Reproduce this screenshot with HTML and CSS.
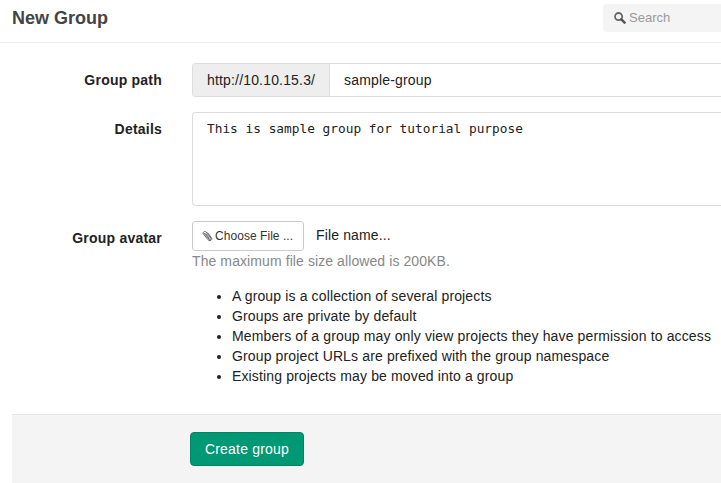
FILE: index.html
```html
<!DOCTYPE html>
<html lang="en">
<head>
<meta charset="utf-8">
<title>New Group</title>
<link rel="stylesheet" href="styles.css">
</head>
<body>
<header class="navbar">
  <h1 class="title">New Group</h1>
  <div class="search">
    <svg class="search-icon" viewBox="0 0 12 12"><circle cx="4.6" cy="4.6" r="3.6" fill="none" stroke="#666" stroke-width="1.8"/><path d="M7.4 7.4l3.2 3.2" stroke="#555" stroke-width="2.5" stroke-linecap="round"/></svg>
    <span>Search</span>
  </div>
</header>
<main class="content">
  <form class="group-form">
    <div class="row path-row">
      <label class="label">Group path</label>
      <div class="input-group">
        <span class="addon">http://10.10.15.3/</span>
        <span class="path-value">sample-group</span>
      </div>
    </div>
    <div class="row details-row">
      <label class="label">Details</label>
      <div class="details">This is sample group for tutorial purpose</div>
    </div>
    <div class="row avatar-row">
      <label class="label">Group avatar</label>
      <div class="field">
        <div class="file-line">
          <span class="choose"><svg class="clip" viewBox="0 0 11 12"><path d="M2.2 3.2l5 6.1c.8.9 2.4-.3 1.6-1.3L4.1 2.1C2.8.5.2 2.3 1.5 4.1l4.6 5.7c1.8 2.1 4.9-.1 3.3-2.3L5.5 2.7M3.8 3.8l3.4 4.3" fill="none" stroke="#555" stroke-width=".9" stroke-linecap="round"/></svg><span>Choose File ...</span></span>
          <span class="file-name">File name...</span>
        </div>
        <div class="hint">The maximum file size allowed is 200KB.</div>
      </div>
    </div>
    <ul class="notes">
      <li>A group is a collection of several projects</li>
      <li>Groups are private by default</li>
      <li>Members of a group may only view projects they have permission to access</li>
      <li>Group project URLs are prefixed with the group namespace</li>
      <li>Existing projects may be moved into a group</li>
    </ul>
    <div class="actions"><button type="button" class="create">Create group</button></div>
  </form>
</main>
</body>
</html>
```
FILE: styles.css
```css
* { box-sizing: border-box; }
body {
  margin: 0;
  height: 483px;
  overflow: hidden;
  background: #fff;
  color: #222;
  font: 14px/20px "Liberation Sans", Arial, sans-serif;
}
.navbar {
  display: flex;
  justify-content: space-between;
  height: 43px;
  padding: 4px 0 0 12px;
  border-bottom: 1px solid #eee;
}
.title {
  margin: 0;
  color: #444;
  font-size: 18px;
  line-height: 28px;
}
.search {
  display: flex;
  align-items: center;
  gap: 3px;
  width: 118px;
  height: 28px;
  padding-left: 11px;
  border-radius: 4px 0 0 4px;
  background: #f4f4f4;
  color: #999;
  font-size: 13px;
}
.search-icon { width: 12px; height: 12px; }
.content { padding: 20px 0 0 12px; }
.row { display: flex; }
.label {
  width: 150px;
  margin-right: 30px;
  padding-top: 7px;
  text-align: right;
  font-weight: bold;
  letter-spacing: .22px;
}
.input-group {
  display: flex;
  flex: 1;
  height: 34px;
  border: 1px solid #ddd;
  border-right: 0;
  border-radius: 4px 0 0 4px;
  line-height: 32px;
  letter-spacing: .17px;
}
.addon {
  width: 137px;
  padding-left: 14px;
  border-right: 1px solid #ddd;
  border-radius: 3px 0 0 3px;
  background: #eee;
}
.path-value { padding-left: 14px; }
.details-row { margin-top: 15px; }
.details {
  flex: 1;
  height: 94px;
  padding: 6px 14px;
  border: 1px solid #ddd;
  border-right: 0;
  border-radius: 4px 0 0 4px;
  font: 12.8px/20px "DejaVu Sans Mono", monospace;
}
.avatar-row { margin-top: 15px; }
.file-line { display: flex; }
.choose {
  display: flex;
  align-items: center;
  gap: 2px;
  width: 112px;
  height: 30px;
  padding-left: 9px;
  border: 1px solid #ccc;
  border-radius: 3px;
  color: #333;
  font-size: 12px;
  letter-spacing: .05px;
}
.clip { width: 11px; height: 12px; }
.file-name {
  padding: 4px 0 0 12px;
  letter-spacing: .14px;
}
.hint {
  color: #888;
  letter-spacing: .09px;
}
.notes {
  margin: 15px 0 0 180px;
  padding-left: 40px;
  white-space: nowrap;
  letter-spacing: .137px;
}
.actions {
  height: 69px;
  margin-top: 28px;
  padding: 17px 0 0 178px;
  border-top: 1px solid #e5e5e5;
  background: #f4f4f4;
}
.create {
  display: block;
  width: 114px;
  height: 34px;
  padding: 0;
  border: 1px solid #00855f;
  border-radius: 4px;
  background: #019875;
  color: #fff;
  font: inherit;
  letter-spacing: .2px;
}
```
